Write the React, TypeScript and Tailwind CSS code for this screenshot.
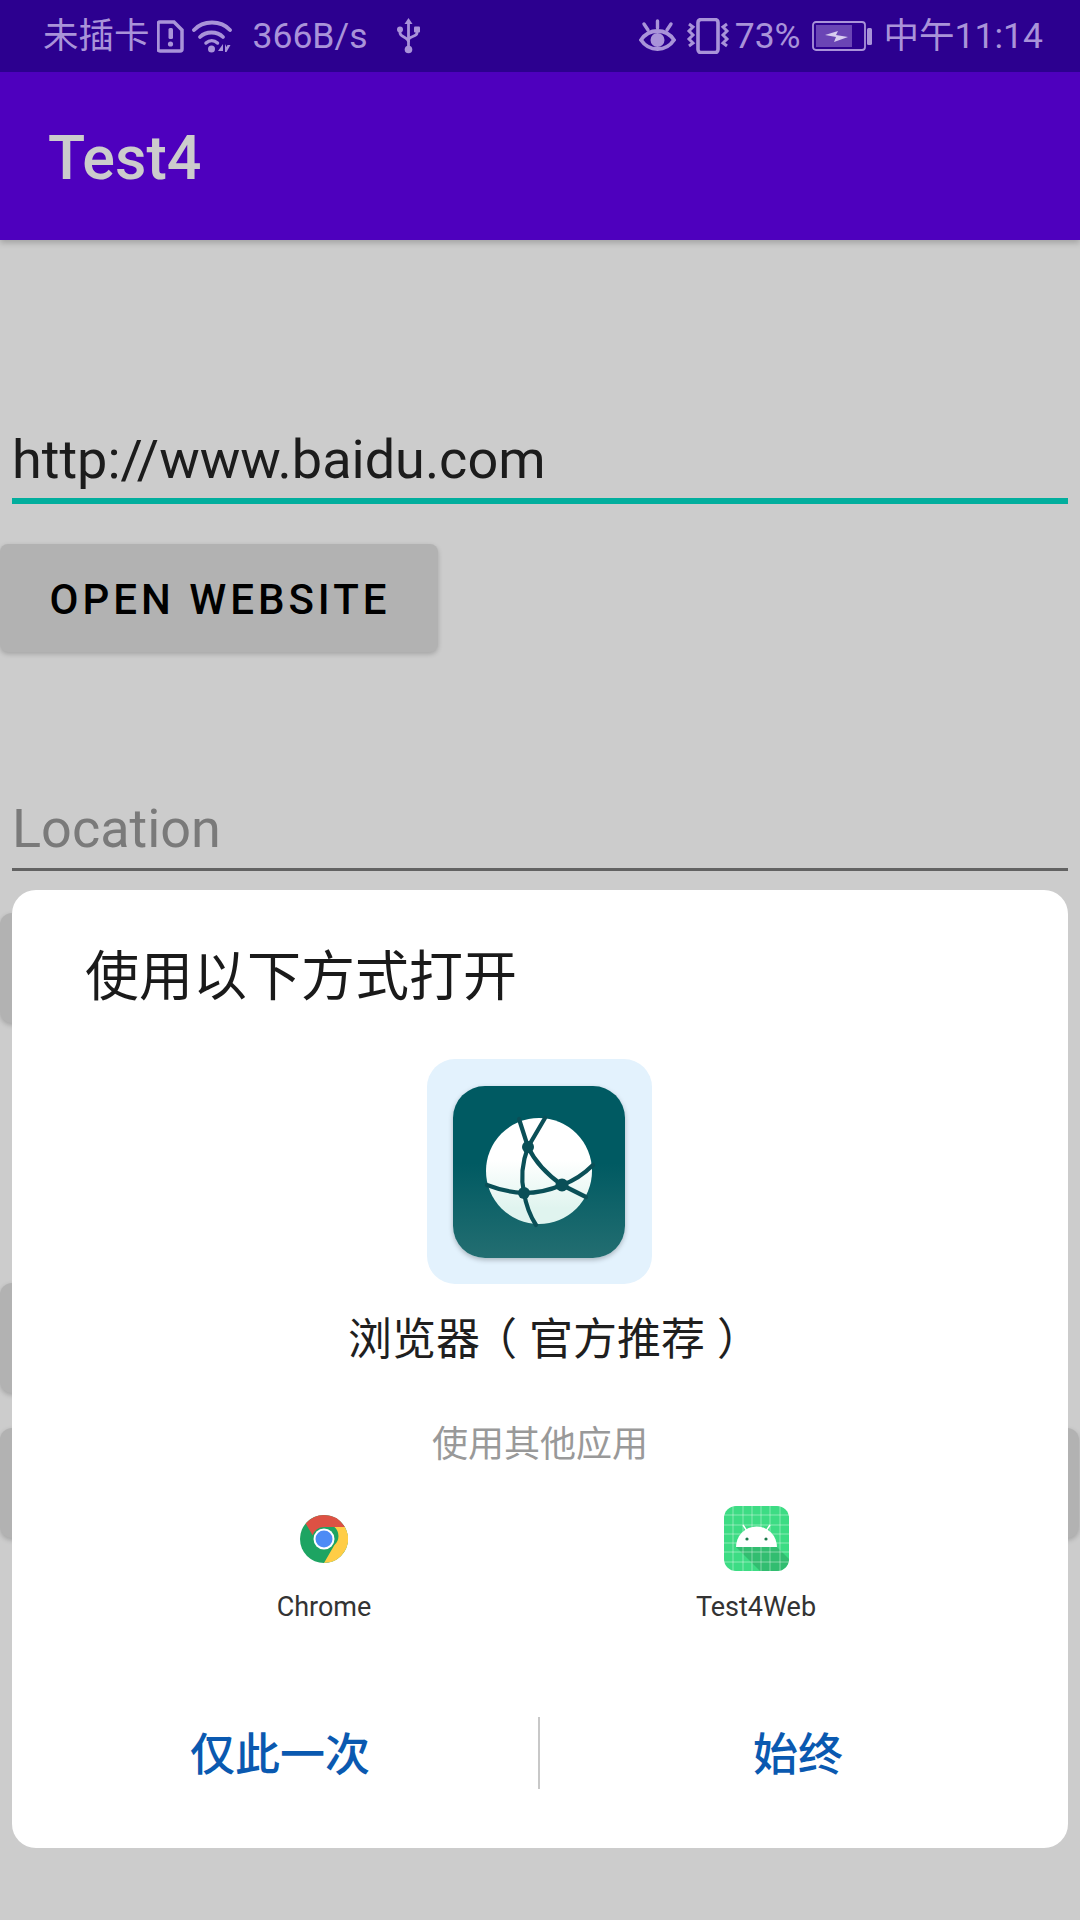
function SimIcon() {
  return (
    <svg width="27" height="33" viewBox="0 0 27 33" className="text-[#a993d9]">
      <path d="M3 2h14l8 8v19a2 2 0 0 1-2 2H3a2 2 0 0 1-2-2V4a2 2 0 0 1 2-2z" fill="none" stroke="currentColor" strokeWidth="3.500" />
      <rect x="11.500" y="8" width="4.500" height="11" rx="1.500" fill="currentColor" />
      <circle cx="13.500" cy="24" r="2.600" fill="currentColor" />
    </svg>
  );
}

function WifiIcon() {
  return (
    <svg width="41" height="34" viewBox="0 0 41 34" fill="none" className="text-[#a993d9]">
      <path d="M2 11C11 1 29 1 38 11" stroke="currentColor" strokeWidth="3.800" strokeLinecap="round" />
      <path d="M8 18c6-6 17-6 23 0" stroke="currentColor" strokeWidth="3.800" strokeLinecap="round" />
      <path d="M14 24c3.500-3 8-3 11.500 0" stroke="currentColor" strokeWidth="3.500" strokeLinecap="round" />
      <circle cx="19.500" cy="30" r="3.500" fill="currentColor" />
      <path d="M31 25v7h-5zM33 25v8h1.500l4-7h-3l-1 2z" fill="currentColor" />
    </svg>
  );
}

function UsbIcon() {
  return (
    <svg width="23" height="36" viewBox="0 0 23 36" fill="none" className="text-[#a993d9]">
      <path d="M11.500 0l4 6h-8z" fill="currentColor" />
      <path d="M11.500 5v26" stroke="currentColor" strokeWidth="2.800" />
      <path d="M3 12v3c0 4 8.500 4 8.500 9M20 11v4c0 4-8.500 3-8.500 7" stroke="currentColor" strokeWidth="2.800" />
      <circle cx="3" cy="11.500" r="3" fill="currentColor" />
      <rect x="17" y="8.500" width="6" height="6" rx="1" fill="currentColor" />
      <circle cx="11.500" cy="31.500" r="3.800" fill="currentColor" />
    </svg>
  );
}

function EyeIcon() {
  return (
    <svg width="37" height="34" viewBox="0 0 37 34" fill="none" className="text-[#a993d9]">
      <path d="M2 21C10 9 27 9 35 21 27 33 10 33 2 21z" stroke="currentColor" strokeWidth="3.800" />
      <circle cx="18.500" cy="21" r="7" fill="currentColor" />
      <path d="M18.500 2v7M5 5l4 6M32 5l-4 6" stroke="currentColor" strokeWidth="3.400" strokeLinecap="round" />
    </svg>
  );
}

function VibrateIcon() {
  return (
    <svg width="44" height="36" viewBox="0 0 44 36" fill="none" className="text-[#a993d9]">
      <rect x="12" y="1.500" width="20" height="33" rx="3" stroke="currentColor" strokeWidth="3.600" />
      <path d="M3 6l4 3-4 4 4 4-4 4 4 4-4 3M41 6l-4 3 4 4-4 4 4 4-4 4 4 3" stroke="currentColor" strokeWidth="3" />
    </svg>
  );
}

function BatteryIcon() {
  return (
    <svg width="60" height="32" viewBox="0 0 60 32" fill="none">
      <rect x="1" y="2" width="52" height="28" rx="3" stroke="#a993d9" strokeWidth="1.800" />
      <rect x="4" y="5" width="36" height="22" fill="#6a45b5" />
      <rect x="55" y="8" width="5" height="17" rx="1.500" fill="#a993d9" />
      <path d="M13 15l13-4-2 4 12 2-14 5 2-5z" fill="#d8cdf0" />
    </svg>
  );
}

function BrowserIcon() {
  return (
    <svg width="172" height="172" viewBox="0 0 172 172" fill="none">
      <defs>
        <linearGradient id="tile" x1="0" y1="0" x2="0" y2="1">
          <stop offset="0.45" stopColor="#005a62" />
          <stop offset="1" stopColor="#236e71" />
        </linearGradient>
        <linearGradient id="ball" x1="0" y1="0" x2="0" y2="1">
          <stop offset="0.4" stopColor="#ffffff" />
          <stop offset="0.85" stopColor="#e0f4ef" />
        </linearGradient>
      </defs>
      <rect width="172" height="172" rx="32" fill="url(#tile)" />
      <circle cx="86" cy="85" r="53" fill="url(#ball)" />
      <g stroke="#0a4f57" strokeWidth="4.200" strokeLinecap="round">
        <path d="M66 33l9 28M92 32L75 61" />
        <path d="M75 61Q85 82 109 99Q126 93 140 79" />
        <path d="M109 99l24 12" />
        <path d="M34 99Q52 106 71 107Q90 107 109 99" />
        <path d="M75 61Q66 85 71 107Q74 125 83 139" />
      </g>
      <circle cx="75" cy="61" r="6" fill="#0a4f57" />
      <circle cx="71" cy="107" r="6" fill="#0a4f57" />
      <circle cx="109" cy="99" r="6.500" fill="#0a4f57" />
    </svg>
  );
}

function ChromeIcon() {
  return (
    <svg width="48" height="48" viewBox="0 0 48 48">
      <circle cx="24" cy="24" r="24" fill="#1da462" />
      <path d="M24 0a24 24 0 0 1 20.800 12H24a12 12 0 0 0-11.400 8.300L5.700 8.600A24 24 0 0 1 24 0z" fill="#dd5144" />
      <path d="M44.800 12A24 24 0 0 1 24 48l10.400-18A12 12 0 0 0 34.400 12z" fill="#ffcd46" />
      <circle cx="24" cy="24" r="10.500" fill="#ffffff" />
      <circle cx="24" cy="24" r="8.500" fill="#4c8bf5" />
    </svg>
  );
}

function AndroidIcon() {
  return (
    <svg width="65" height="65" viewBox="0 0 65 65" fill="none">
      <rect width="65" height="65" rx="12" fill="#3ddc84" />
      <path d="M12 41h41l12 12a12 12 0 0 1-12 12H36z" fill="#2fb56c" opacity="0.8" />
      <g stroke="#ffffff" strokeOpacity="0.45" strokeWidth="0.900">
        <path d="M9 0v65M19 0v65M28 0v65M37 0v65M46 0v65M56 0v65" />
        <path d="M0 9h65M0 19h65M0 28h65M0 37h65M0 46h65M0 56h65" />
      </g>
      <path d="M12 41a20.500 20.500 0 0 1 41 0z" fill="#ffffff" />
      <path d="M19 19l4 6M46 19l-4 6" stroke="#ffffff" strokeWidth="1.400" />
      <circle cx="23" cy="33" r="1.600" fill="#1c7a4b" />
      <circle cx="42" cy="33" r="1.600" fill="#1c7a4b" />
    </svg>
  );
}

function StatusBar() {
  return (
    <div className="h-[72px] bg-[#2c008f] flex items-center justify-between pl-[43px] pr-[37px] text-[#a993d9] text-[35.5px] leading-none relative z-20">
      <div className="flex items-center">
        <span className="pt-[2px]">未插卡</span>
        <span className="ml-[7px] flex"><SimIcon /></span>
        <span className="ml-[8px] flex"><WifiIcon /></span>
        <span className="ml-[20px] pt-[2px]">366B/s</span>
        <span className="ml-[30px] flex"><UsbIcon /></span>
      </div>
      <div className="flex items-center">
        <EyeIcon />
        <span className="ml-[10px] flex"><VibrateIcon /></span>
        <span className="ml-[5px] pt-[2px]">73%</span>
        <span className="ml-[11px] flex"><BatteryIcon /></span>
        <span className="ml-[12px] pt-[2px]">中午11:14</span>
      </div>
    </div>
  );
}

function BackButton({ className }: { className: string }) {
  return <div className={`h-[110px] rounded-[12px] bg-[#dfdfdf] shadow-[0_2px_5px_rgba(0,0,0,0.2)] ${className}`} />;
}

export default function App() {
  return (
    <div className="relative w-[1080px] h-[1920px] overflow-hidden bg-white font-['Roboto','Noto_Sans_CJK_SC',sans-serif]">
      <StatusBar />
      <div className="h-[168px] bg-[#6200ee] flex items-center pl-[48px] pt-[4px] shadow-[0_3px_6px_rgba(0,0,0,0.2)]">
        <span className="text-white text-[61px] font-medium leading-none">Test4</span>
      </div>

      <div className="flex flex-col">
        <div className="mx-[12px] mt-[182px] h-[82px] border-b-[6px] border-[#03dac5] text-[54px] leading-[76px] text-[#242424]">
          http://www.baidu.com
        </div>
        <div className="mt-[40px] w-[438px] h-[108px] pt-[2px] pl-[2px] rounded-[8px] bg-[#dfdfdf] shadow-[0_2px_5px_rgba(0,0,0,0.2)] flex items-center justify-center text-[42px] font-medium tracking-[4px] text-black">
          OPEN WEBSITE
        </div>
        <div className="mx-[12px] mt-[135px] h-[84px] border-b-[3px] border-[#7b7b7b] text-[54px] leading-[84px] text-[#999999]">
          Location
        </div>
        <BackButton className="mt-[42px] w-[400px]" />
        <BackButton className="mt-[260px] w-[400px]" />
        <BackButton className="mt-[35px] w-[1079px]" />
      </div>

      <div className="absolute inset-0 bg-black/20" />

      <div className="absolute left-[12px] top-[890px] w-[1056px] h-[958px] rounded-[24px] bg-white flex flex-col">
        <div className="pl-[73px] pt-[58px] text-[54px] leading-[60px] text-[#1a1a1a]">使用以下方式打开</div>
        <div className="mt-[51px] mr-[2px] self-center w-[225px] h-[225px] rounded-[28px] bg-[#e3f2fd] flex items-center justify-center">
          <div className="rounded-[32px] shadow-[0_2px_5px_rgba(0,0,0,0.25)] flex">
            <BrowserIcon />
          </div>
        </div>
        <div className="mt-[28px] pl-[22px] text-center text-[44px] leading-[56px] text-[#1f1f1f]">
          浏览器<span className="inline-block w-[49px] text-center [font-feature-settings:'palt']">（</span>官方推荐<span className="inline-block w-[49px] text-center [font-feature-settings:'palt']">）</span>
        </div>
        <div className="mt-[52px] text-center text-[36px] leading-[50px] text-[#999999]">使用其他应用</div>
        <div className="mt-[36px] flex justify-between pl-[258px] pr-[258px]">
          <div className="w-[108px] flex flex-col items-center">
            <div className="h-[65px] flex items-center"><ChromeIcon /></div>
            <span className="mt-[18px] text-[27px] leading-[36px] text-[#333333] whitespace-nowrap">Chrome</span>
          </div>
          <div className="w-[108px] flex flex-col items-center">
            <div className="h-[65px] flex items-center"><AndroidIcon /></div>
            <span className="mt-[18px] text-[27px] leading-[36px] text-[#333333] whitespace-nowrap">Test4Web</span>
          </div>
        </div>
        <div className="mt-[92px] flex items-center h-[72px]">
          <div className="flex-1 text-center pl-[10px] pt-[6px] text-[45px] font-medium text-[#0a59b0]">仅此一次</div>
          <div className="w-[2px] h-[72px] bg-[#c8c8c8]" />
          <div className="flex-1 text-center pr-[12px] pt-[6px] text-[45px] font-medium text-[#0a59b0]">始终</div>
        </div>
      </div>
    </div>
  );
}
